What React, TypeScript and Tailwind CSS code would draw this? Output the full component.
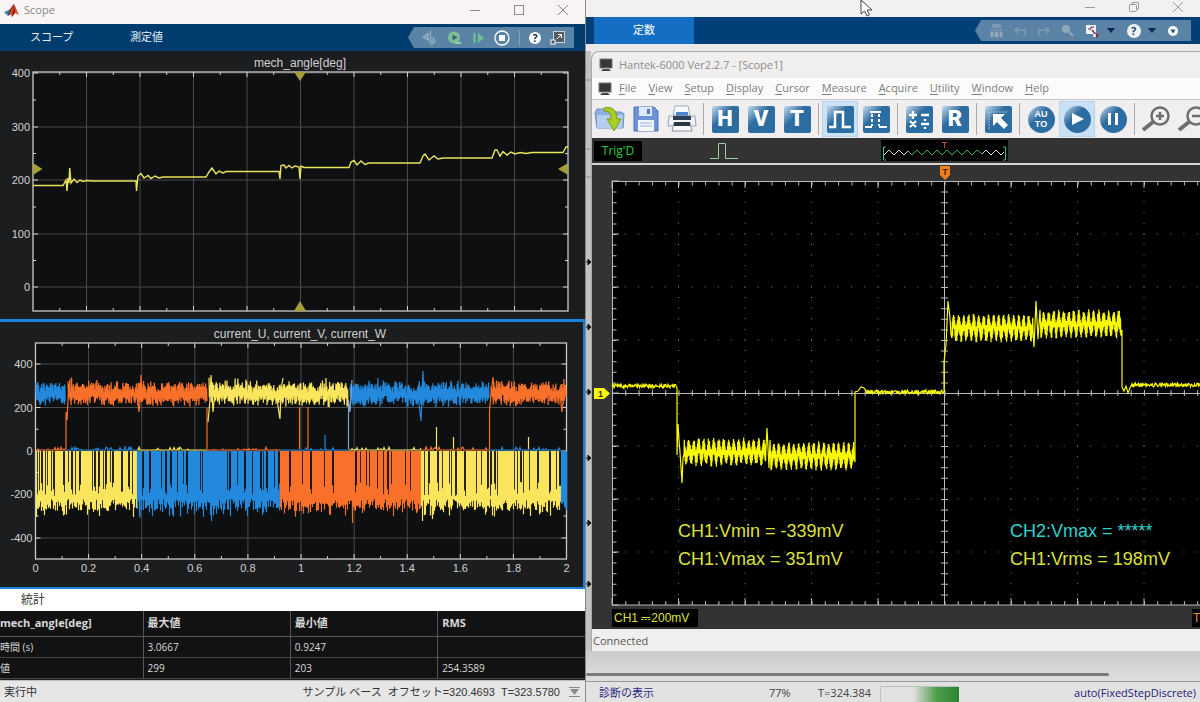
import type { ReactNode } from 'react'
import { clsx } from 'clsx'

const BLUE = '#2389dc'
const ORANGE = '#f8702a'
const YELLOW = '#fae55c'

// small seeded generator so the traces stay the same on every render
function seeded(seed: number) {
  let s = seed
  return () => {
    s = (s * 16807) % 2147483647
    return s / 2147483647
  }
}

const range = (n: number) => Array.from({ length: n }, (_, i) => i)

// conduction band at the top of the phase currents
function upperBand(x0: number, x1: number, seed: number) {
  const rnd = seeded(seed)
  let d = ''
  for (let x = x0; x <= x1; x += 0.9) {
    const mid = 394 + (rnd() - 0.5) * 7
    const top = mid - 4 - rnd() * 7 - (rnd() > 0.9 ? 3 : 0)
    const bottom = mid + 4 + rnd() * 6
    d += `${d ? 'L' : 'M'}${x.toFixed(1)} ${top.toFixed(1)}L${(x + 0.4).toFixed(1)} ${bottom.toFixed(1)}`
  }
  return d
}

// PWM band hanging under zero
function lowerBand(x0: number, x1: number, seed: number, duty: number) {
  const rnd = seeded(seed)
  let d = ''
  let gap = 0
  for (let x = x0; x <= x1; x += 1) {
    if (gap > 0) gap -= 1
    else if (rnd() > duty) gap = rnd() > 0.5 ? 2 : 1
    const top = gap > 0 ? 482 + rnd() * 14 : 451
    const bottom = 499 + rnd() * 12 + (rnd() > 0.75 ? 6 : 0)
    d += `M${x + 0.5} ${top.toFixed(1)}V${bottom.toFixed(1)}`
  }
  return d
}

function zeroLine(x0: number, x1: number, seed: number) {
  const rnd = seeded(seed)
  let d = `M${x0} 450`
  for (let x = x0 + 1; x <= x1; x += 1) d += `L${x} ${(450 - (rnd() > 0.8 ? rnd() * 3 : 0)).toFixed(1)}`
  return d
}

const upper = [
  { from: 36, to: 65, color: BLUE },
  { from: 68, to: 207, color: ORANGE },
  { from: 209, to: 348, color: YELLOW },
  { from: 350, to: 489, color: BLUE },
  { from: 491, to: 566, color: ORANGE },
]
const lower = [
  { from: 36, to: 136, color: YELLOW, duty: 0.68 },
  { from: 137, to: 279, color: BLUE, duty: 0.8 },
  { from: 280, to: 420, color: ORANGE, duty: 0.84 },
  { from: 421, to: 560, color: YELLOW, duty: 0.76 },
  { from: 561, to: 566, color: BLUE, duty: 1 },
]
const zero = [
  { from: 36, to: 66, color: ORANGE },
  { from: 66, to: 137, color: BLUE },
  { from: 137, to: 207, color: YELLOW },
  { from: 207, to: 280, color: ORANGE },
  { from: 280, to: 349, color: BLUE },
  { from: 349, to: 421, color: YELLOW },
  { from: 421, to: 490, color: ORANGE },
  { from: 490, to: 561, color: BLUE },
]
const spikes = [
  { d: 'M66 449V412L67 420L68 400L70 379', color: ORANGE },
  { d: 'M137 395L139 412L140 402L141 375L142 395', color: ORANGE },
  { d: 'M207 449V408', color: ORANGE },
  { d: 'M208 422L210 400L211 375L213 412L215 390', color: YELLOW },
  { d: 'M277 400L280 419L281 390L283 378', color: YELLOW },
  { d: 'M299.5 449V407M308 449V407', color: ORANGE },
  { d: 'M348.5 449V400L350 412L352 380', color: '#7ea6cf' },
  { d: 'M325 449V435', color: BLUE },
  { d: 'M418 395L421 421L422 395L423 371L424 402', color: BLUE },
  { d: 'M436.5 449V427M453.5 449V437M528.5 449V437', color: YELLOW },
  { d: 'M489.5 449V411L491 395L493 377L495 400', color: ORANGE },
  { d: 'M560 394L562 412L563 402', color: ORANGE },
  { d: 'M211.5 480V521M140 500V518', color: BLUE },
  { d: 'M352.5 480V523', color: ORANGE },
  { d: 'M422.5 480V521M432.5 480V519', color: YELLOW },
]

function Plot({ x, y, w, h, rows, labels }: {
  x: number
  y: number
  w: number
  h: number
  rows: number[]
  labels: string[]
}) {
  const step = w / 10
  return (
    <g>
      <rect x={x} y={y} width={w} height={h} fill="#0d0f11" />
      <g stroke="#4b4b4c" strokeWidth="1">
        {range(9).map((i) => <path key={i} d={`M${x + step * (i + 1)} ${y}v${h}`} />)}
        {rows.map((r) => <path key={r} d={`M${x} ${r}h${w}`} />)}
      </g>
      <g stroke="#d4d4d4" strokeWidth="1">
        {range(19).map((i) => {
          const t = i % 2 ? 5 : 3
          return <path key={i} d={`M${x + (step / 2) * (i + 1)} ${y}v${t}m0 ${h - 2 * t}v${t}`} />
        })}
        {rows.map((r) => <path key={r} d={`M${x} ${r}h5m${w - 10} 0h5`} />)}
        {rows.slice(1).map((r, i) => {
          const mid = (r + rows[i]) / 2
          return <path key={r} d={`M${x} ${mid}h3m${w - 6} 0h3`} />
        })}
      </g>
      <rect x={x} y={y} width={w} height={h} fill="none" stroke="#c9c9c9" strokeWidth="1.3" />
      <g fill="#d2d2d2" fontSize="11" textAnchor="end">
        {rows.map((r, i) => <text key={r} x={x - 3} y={r + 4}>{labels[i]}</text>)}
      </g>
    </g>
  )
}

function AngleChart() {
  return (
    <svg viewBox="0 51 585 268" className="w-full h-auto bg-[#1b1d1e] font-['Liberation_Sans',sans-serif]">
      <text x="300" y="67" fontSize="12" fill="#d2d2d2" textAnchor="middle">mech_angle[deg]</text>
      <Plot x={33} y={72} w={535} h={239} rows={[73, 127, 180, 234, 287]} labels={['400', '300', '200', '100', '0']} />
      <path
        d="M33 185.5H63L66 180L67 191L68 178L69 183L69.700 168L71 183L74 179L77 182.500L80 180L83 181.500L87 180.500L92 181H136L136.500 191L138 176L141 173.500L144 178L148 175.500L151 178.500L155 176L159 178L163 177H206L209 172L212 168L216 174L219 171L223 173L226 171.500H279L280 179L281 165.500L284 165L286 168L289 165.500L292 168L295 166L299 167L300 179L301 166L304 167.500H349L351 162L354 160.500L357 165L361 161L365 164.500L369 163H420L423 156L425 154L429 160L434 156L438 159L443 158H492L495 150L497 150L500 156L503 151.500L507 155L511 152L515 154L520 152.500L526 153.500L532 152.500H563L566 147H568"
        fill="none" stroke="#e8e45c" strokeWidth="1.4"
      />
      <g fill="#a3a03a">
        <path d="M294 72h12l-6 9z" />
        <path d="M294 311h12l-6-10z" />
        <path d="M33 163v12l9.500-6z" />
        <path d="M568 163v12l-10-6z" />
      </g>
    </svg>
  )
}

function CurrentChart() {
  return (
    <svg viewBox="0 322 583 265" className="w-full h-auto bg-[#1b1d1e] font-['Liberation_Sans',sans-serif]">
      <text x="300" y="338" fontSize="12" fill="#d2d2d2" textAnchor="middle">current_U, current_V, current_W</text>
      <Plot x={35.5} y={343} w={531} h={216} rows={[364, 407.5, 451, 494, 538]} labels={['400', '200', '0', '-200', '-400']} />
      <g fill="none" strokeWidth="1.2">
        {lower.map((s, i) => <path key={s.from} d={lowerBand(s.from, s.to, 91 + i * 37, s.duty)} stroke={s.color} />)}
        {upper.map((s, i) => <path key={s.from} d={upperBand(s.from, s.to, 1700 + i * 5300)} stroke={s.color} />)}
        {zero.map((s, i) => <path key={s.from} d={zeroLine(s.from, s.to, 7 + i * 11)} stroke={s.color} />)}
        {spikes.map((s) => <path key={s.d} d={s.d} stroke={s.color} />)}
      </g>
      <g fill="#d2d2d2" fontSize="11" textAnchor="middle">
        {['0', '0.2', '0.4', '0.6', '0.8', '1', '1.2', '1.4', '1.6', '1.8', '2'].map((t, i) => (
          <text key={t} x={35.5 + i * 53.1} y="572">{t}</text>
        ))}
      </g>
    </svg>
  )
}

const stats = [
  ['時間 (s)', '3.0667', '0.9247', ''],
  ['値', '299', '203', '254.3589'],
]

function ScopeWindow() {
  return (
    <section className="w-[48.75%] shrink-0 flex flex-col bg-[#1b1d1e] overflow-hidden">
      <header className="h-6 flex items-center justify-between pl-1 pr-4 bg-[#f7f4f3] text-[#8a8a8a]">
        <div className="flex items-center gap-1">
          <svg width="16" height="16" viewBox="0 0 16 16" className="mt-[-3px]">
            <path d="M0 9l5-2 2 2-3 4z" fill="#3d7fb5" />
            <path d="M5 7c2-1 3-5 5-6l-2 9-4 3z" fill="#6d3b45" />
            <path d="M10 1c2 3 3 8 5 11l-4-2-3 4-2-4z" fill="#dd4a28" />
            <path d="M10 1l1 9-3 4z" fill="#8f2420" />
          </svg>
          <h1 className="text-[11px] leading-4 -mt-1">Scope</h1>
        </div>
        <div className="flex items-center gap-8 -mt-1">
          <button aria-label="Minimize"><svg width="12" height="12" viewBox="0 0 12 12" fill="none" stroke="currentColor"><path d="M1 6.500h10" /></svg></button>
          <button aria-label="Maximize"><svg width="12" height="12" viewBox="0 0 12 12" fill="none" stroke="currentColor"><rect x="1.500" y="1.500" width="9" height="9" /></svg></button>
          <button aria-label="Close"><svg width="12" height="12" viewBox="0 0 12 12" fill="none" stroke="currentColor"><path d="M1 1l10 10M11 1L1 11" /></svg></button>
        </div>
      </header>

      <div className="h-[27px] flex items-center justify-between pl-[30px] pr-[11px] bg-[#003c6e] text-[#e4f0f8]">
        <nav className="flex text-[11px]">
          <button className="w-[100px] text-left">スコープ</button>
          <button className="w-[100px] text-left">測定値</button>
        </nav>
        <div className="h-[21px] w-[166px] flex items-center justify-between pl-3 pr-2 bg-[#5b83a5] [clip-path:polygon(0_50%,6px_0,100%_0,100%_100%,6px_100%)]">
          <button aria-label="Step back options">
            <svg width="18" height="16" viewBox="0 0 18 16" fill="none" stroke="#a5bac8"><path d="M8 3L3 7l5 3z" fill="#7f9bb0" /><path d="M10.500 1v6" /><circle cx="12" cy="11" r="3" /><circle cx="12" cy="11" r="1" /></svg>
          </button>
          <button aria-label="Run">
            <svg width="16" height="16" viewBox="0 0 16 16"><circle cx="7" cy="7.500" r="6" fill="#7fbd98" /><path d="M5.500 4.500l5 3-5 3z" fill="#2e6a75" /><path d="M8 12h6v2H8z" fill="#8fd0a2" /></svg>
          </button>
          <button aria-label="Step forward">
            <svg width="14" height="16" viewBox="0 0 14 16"><path d="M2.500 3v10" stroke="#6bc590" strokeWidth="2" /><path d="M6 3l6 5-6 5z" fill="#6bc590" /></svg>
          </button>
          <button aria-label="Stop">
            <svg width="16" height="16" viewBox="0 0 16 16"><circle cx="8" cy="8" r="7" fill="none" stroke="#fff" strokeWidth="1.300" /><rect x="5" y="5" width="6" height="6" fill="#fff" /></svg>
          </button>
          <span className="w-px h-4 bg-[#86a3bb]" />
          <button className="size-3 rounded-full bg-white text-[#10243c] text-[10px] leading-3 font-bold" aria-label="Help">?</button>
          <button aria-label="Undock">
            <svg width="16" height="16" viewBox="0 0 16 16" fill="none"><rect x="3.500" y="1.500" width="11" height="11" fill="#555f68" stroke="#c9d3da" /><path d="M7 9l4-4M8 4.500h3.500V8" stroke="#fff" /><rect x="1" y="10" width="4" height="4" fill="#3c5368" stroke="#fff" /></svg>
          </button>
        </div>
      </div>

      <AngleChart />
      <div className="border-t-[3px] border-b-2 border-r-2 border-[#1883db]">
        <CurrentChart />
      </div>

      <h2 className="h-[22px] pl-[21px] bg-white text-xs leading-[22px] text-[#333]">統計</h2>
      <table className="w-full table-fixed border-collapse bg-[#121213] text-[#dadada] text-[11px] leading-4 text-left">
        <thead>
          <tr className="h-[25px] border-b border-[#555]">
            <th className="w-[143px] font-bold border-r border-[#555]">mech_angle[deg]</th>
            <th className="pl-1 font-bold border-r border-[#555]">最大値</th>
            <th className="pl-1 font-bold border-r border-[#555]">最小値</th>
            <th className="pl-1 font-bold">RMS</th>
          </tr>
        </thead>
        <tbody className="text-[10px]">
          {stats.map((row) => (
            <tr key={row[0]} className="h-[21px] border-b border-[#444]">
              {row.map((cell, i) => (
                <td key={i} className={clsx(i > 0 && 'pl-1', i < 3 && 'border-r border-[#555]')}>{cell}</td>
              ))}
            </tr>
          ))}
        </tbody>
      </table>

      <footer className="flex-1 min-h-[22px] mt-px flex items-center bg-[#e6e6e6] border-t border-[#bbb] pl-1 pr-1 text-[11px] text-[#333] whitespace-nowrap font-['Liberation_Sans','Noto_Sans_CJK_JP',sans-serif]">
        <span>実行中</span>
        <span className="ml-auto">サンプル ベース</span>
        <span className="ml-[6px]">オフセット=320.4693</span>
        <span className="ml-[6px]">T=323.5780</span>
        <svg width="13" height="10" viewBox="0 0 13 10" className="ml-2"><path d="M1 .500h11M1 9.500h11" stroke="#8a8a8a" /><path d="M2 2h9L6.500 8z" fill="#8a8a8a" /></svg>
      </footer>
    </section>
  )
}

function TileIcon({ round, children }: { round?: boolean; children: ReactNode }) {
  return (
    <span
      className={clsx(
        'size-[27px] flex flex-col items-center justify-center text-white bg-linear-to-br from-[#b4d0e5] from-5% via-[#2d6c9f] via-40% to-[#2a6fa6]',
        round ? 'rounded-full' : 'rounded-[2px]',
      )}
    >
      {children}
    </span>
  )
}

function ToolButton({ label, active, children }: { label: string; active?: boolean; children: ReactNode }) {
  return (
    <button
      aria-label={label}
      className={clsx('w-9 h-9 shrink-0 flex items-center justify-center', active && 'bg-[#c9e0f5] border border-[#b3d2ee]')}
    >
      {children}
    </button>
  )
}

const Letter = ({ children }: { children: string }) => (
  <span className="text-[22px] leading-6 font-black font-['Roboto',sans-serif]">{children}</span>
)
const Sep = () => <span className="w-px h-8 mx-[3px] shrink-0 bg-[#a9a9a9]" />

function Toolbar() {
  return (
    <div className="h-[39px] flex items-center bg-[#f0eeee] border-t border-[#c5c5c5] overflow-hidden">
      <ToolButton label="Open">
        <svg width="32" height="28" viewBox="0 0 32 28">
          <path d="M1 8l2-4h9l2 3h13l3 2-1 14H3z" fill="#8fb0dc" stroke="#6d8fbf" />
          <path d="M3 10h26l-1 13H3z" fill="#b5cdef" />
          <path d="M10 3c8-2 13 2 13 11h4l-7 12-7-12h4c0-6-2-8-7-8z" fill="#a8cf22" stroke="#78991c" />
        </svg>
      </ToolButton>
      <ToolButton label="Save">
        <svg width="26" height="26" viewBox="0 0 26 26">
          <path d="M1 1h20l4 4v20H1z" fill="#6d92d6" stroke="#4c70b5" />
          <rect x="6" y="1" width="13" height="9" fill="#dfe9fa" />
          <rect x="14" y="3" width="3" height="5" fill="#5375b8" />
          <rect x="5" y="14" width="16" height="11" fill="#f2f6fd" />
          <path d="M7 17h12M7 20h12" stroke="#9db3dc" />
        </svg>
      </ToolButton>
      <ToolButton label="Print">
        <svg width="30" height="28" viewBox="0 0 30 28">
          <path d="M8 1h13l2 9H6z" fill="#f7fafd" stroke="#9aa9bb" />
          <path d="M9 7h12v5H9z" fill="#4c86c8" />
          <path d="M2 11h26l1 10H1z" fill="#eef2f6" stroke="#9aa3ad" />
          <path d="M6 11h18v4H6z" fill="#2c3f57" />
          <path d="M7 18h16l2 8H5z" fill="#fafafa" stroke="#8a93a0" />
          <path d="M7 17h16v4H7z" fill="#2a3442" />
        </svg>
      </ToolButton>
      <Sep />
      <ToolButton label="Horizontal"><TileIcon><Letter>H</Letter></TileIcon></ToolButton>
      <ToolButton label="Vertical"><TileIcon><Letter>V</Letter></TileIcon></ToolButton>
      <ToolButton label="Trigger"><TileIcon><Letter>T</Letter></TileIcon></ToolButton>
      <Sep />
      <ToolButton label="Pulse" active>
        <TileIcon><svg width="24" height="22" viewBox="0 0 24 22" fill="none" stroke="#fff" strokeWidth="2.500"><path d="M1 19h6V4h8v15h8" /></svg></TileIcon>
      </ToolButton>
      <ToolButton label="Edges">
        <TileIcon>
          <svg width="24" height="22" viewBox="0 0 24 22" fill="none" stroke="#fff" strokeWidth="2"><path d="M1 19h7M15 19h8M6 4h11" /><path d="M8 6v12M15 6v12" strokeDasharray="3 2" /></svg>
        </TileIcon>
      </ToolButton>
      <Sep />
      <ToolButton label="Math">
        <TileIcon>
          <svg width="24" height="24" viewBox="0 0 24 24" fill="none" stroke="#fff" strokeWidth="2.400"><path d="M2 8h8M6 4v8M14 8h8M3 14l6 6M9 14l-6 6M14 17h8M18 12v2M18 20v2" /></svg>
        </TileIcon>
      </ToolButton>
      <ToolButton label="Reference"><TileIcon><Letter>R</Letter></TileIcon></ToolButton>
      <Sep />
      <ToolButton label="Cursor">
        <TileIcon>
          <svg width="24" height="24" viewBox="0 0 24 24"><path d="M3 22V5h19" fill="none" stroke="#a9c9e0" strokeDasharray="2 1" /><path d="M7 7h12l-4 4 7 7-4 4-7-7-4 4z" fill="#fff" /></svg>
        </TileIcon>
      </ToolButton>
      <Sep />
      <ToolButton label="Auto">
        <TileIcon round>
          <span className="text-[9px] leading-[10px] font-bold font-['Liberation_Sans',sans-serif]">AU</span>
          <span className="text-[9px] leading-[10px] font-bold font-['Liberation_Sans',sans-serif]">TO</span>
        </TileIcon>
      </ToolButton>
      <ToolButton label="Start" active>
        <TileIcon round><svg width="16" height="14" viewBox="0 0 16 14"><path d="M3 1l12 6-12 6z" fill="#fff" /></svg></TileIcon>
      </ToolButton>
      <ToolButton label="Pause">
        <TileIcon round><svg width="12" height="14" viewBox="0 0 12 14"><path d="M1 1h3v12H1zM8 1h3v12H8z" fill="#fff" /></svg></TileIcon>
      </ToolButton>
      <Sep />
      <ToolButton label="Zoom in">
        <svg width="30" height="28" viewBox="0 0 30 28" fill="none" stroke="#6e6e6e" strokeWidth="2.500"><circle cx="19" cy="11" r="8.500" /><path d="M15 11h8M19 7v8" /><path d="M12 17L2 25" strokeWidth="4" /></svg>
      </ToolButton>
      <ToolButton label="Zoom out">
        <svg width="30" height="28" viewBox="0 0 30 28" fill="none" stroke="#6e6e6e" strokeWidth="2.500"><circle cx="19" cy="11" r="8.500" /><path d="M15 11h8" /><path d="M12 17L2 25" strokeWidth="4" /></svg>
      </ToolButton>
    </div>
  )
}

// CH1 trace of the oscilloscope
function scopeTrace() {
  const rnd = seeded(4321)
  const flat = (x0: number, x1: number, y: number) =>
    range(Math.floor((x1 - x0) * 2)).map((i) => `L${x0 + i / 2} ${(y + (rnd() - 0.5) * 4).toFixed(1)}`).join('')
  const band = (x0: number, x1: number, y: number) => {
    let d = ''
    let sign = 1
    for (let x = x0; x < x1; x += 0.3) {
      const v = y + Math.sin((x * Math.PI * 2) / 5) * 6 + sign * (5 + rnd() * 4)
      d += `L${x.toFixed(1)} ${v.toFixed(1)}`
      sign = -sign
    }
    return d
  }
  return (
    'M612 386' + flat(613, 676, 386) + 'L677 388V455L678 424L679 440L680 452L682 483L683 458' +
    band(684, 766, 452) + 'L767 428L769 468L770 440' + band(771, 854, 456) + 'L855 462V392L858 391L861 387L864 388' +
    flat(866, 943, 392) + 'L944 392V362L946 345L948 301L950 318L951 335' + band(952, 1033, 328) +
    'L1034 347L1036 301L1038 339L1040 310' + band(1041, 1121, 324) + 'L1122 330V387L1124 391L1126 386L1128 393L1130 388' +
    flat(1132, 1200, 385)
  )
}

function ScopeScreen() {
  const cols = range(9).map((i) => 612 + i * 66.5)
  const rows = range(9).map((i) => 181 + i * 53)
  return (
    <svg viewBox="592 165 608 442" className="w-full h-auto bg-[#333333] font-['Liberation_Sans',sans-serif]">
      <rect x="612" y="181" width="600" height="424" fill="#000" />
      <g stroke="#77777c" strokeWidth="1">
        {rows.slice(1, 8).map((y) => <path key={y} d={`M624.800 ${y}H1200`} strokeDasharray="1 12.300" />)}
        {cols.slice(1).map((x) => <path key={x} d={`M${x} 191V605`} strokeDasharray="1 9.600" />)}
      </g>
      <g fill="none" stroke="#b9b9b9">
        <path d="M612 183.500H1200M612 603H1200" strokeWidth="4" strokeDasharray="1 12.300" />
        <path d="M614.500 181V605" strokeWidth="4" strokeDasharray="1 9.600" />
        {cols.map((x) => <path key={x} d={`M${x} 181v7M${x} 598v7`} />)}
        {rows.map((y) => <path key={y} d={`M612 ${y}h7`} />)}
        <path d="M612 393H1200" strokeWidth="6" strokeDasharray="1 12.300" />
        <path d="M944.500 181V605" strokeWidth="7" strokeDasharray="1 9.600" />
        <path d="M612 393.500H1200M944.500 181V605M612.500 605V181.500H1200M612 605H1200" />
      </g>
      <path d={scopeTrace()} fill="none" stroke="#f8f800" strokeWidth="1.2" />
      <path d="M594 388h10l6 5.500-6 5.500H594z" fill="#f8f800" />
      <text x="598" y="397" fontSize="9" fontWeight="bold" fill="#333">1</text>
      <path d="M940 166h10v9l-5 5-5-5z" fill="#f07f1c" />
      <text x="945" y="175" fontSize="9" fontWeight="bold" fill="#4a2205" textAnchor="middle">T</text>
      <g fontSize="18" fill="#dce03c">
        <text x="678" y="537">CH1:Vmin = -339mV</text>
        <text x="678" y="565">CH1:Vmax = 351mV</text>
        <text x="1010" y="537" fill="#2fd2cf">CH2:Vmax = *****</text>
        <text x="1010" y="565">CH1:Vrms = 198mV</text>
      </g>
    </svg>
  )
}

const MonitorIcon = () => (
  <svg width="14" height="14" viewBox="0 0 14 14"><rect x="1" y="1" width="12" height="9" fill="#33383c" stroke="#777" /><path d="M4 11h6l2 2H2z" fill="#444" /></svg>
)

const menus = ['File', 'View', 'Setup', 'Display', 'Cursor', 'Measure', 'Acquire', 'Utility', 'Window', 'Help']

function HantekWindow() {
  return (
    <section className="flex-1 min-w-0 rounded-tl-lg border-t border-l border-[#a9a9a9] bg-[#f1efee] overflow-hidden">
      <header className="h-[26px] flex items-center gap-[6px] pl-[7px] text-[11px] text-[#8c8c8c]">
        <MonitorIcon />
        <h1>Hantek-6000 Ver2.2.7 - [Scope1]</h1>
      </header>
      <nav className="h-[21px] flex items-center pl-[6px] bg-[#fbfbfb] text-[11px] text-[#7d7d7d]">
        <MonitorIcon />
        <div className="flex gap-3 ml-[7px]">
          {menus.map((m) => (
            <button key={m}><span className="underline underline-offset-2">{m[0]}</span>{m.slice(1)}</button>
          ))}
        </div>
      </nav>
      <Toolbar />

      <div className="h-[27px] flex items-center justify-between pl-[2px] pr-[192px] bg-[#333333] border-b-2 border-[#d5d5d5]">
        <div className="flex items-center gap-[68px]">
          <span className="w-12 h-5 bg-black text-[#22cf3c] text-xs leading-5 text-center">Trig'D</span>
          <svg width="28" height="18" viewBox="0 0 28 18" fill="none" stroke="#9dc9a0"><path d="M0 16.500h8.500v-15h7v15H28" /></svg>
        </div>
        <svg width="127" height="21" viewBox="0 0 127 21" fill="none" className="bg-black">
          <path d="M3 15l5-5 5 5 5-5 5 5 4-4" stroke="#ddd" />
          <path d="M27 11l4 4 5-5 5 5 5-5 5 5 5-5 5 5 5-5 5 5 5-5 5 5 5-5 5 5 5-5 5 4" stroke="#2fae45" />
          <path d="M101 14l4-4 5 5 5-5 5 5 3-3" stroke="#ddd" />
          <path d="M5 7H2.500v13H5M122 7h2.500v13H122" stroke="#2fbfa5" />
          <path d="M61 2.500h5M63.500 2v6" stroke="#c2482a" />
        </svg>
      </div>

      <ScopeScreen />
      <div className="h-[22px] flex items-center justify-between pl-5 bg-[#333333] text-xs text-[#dce03c] font-['Liberation_Sans',sans-serif]">
        <span className="h-[18px] w-[86px] pl-[2px] leading-[18px] bg-black whitespace-nowrap">CH1 ⎓200mV</span>
        <span className="h-[18px] w-[8px] pl-px leading-[18px] bg-black text-[#e08a2c] overflow-hidden">T</span>
      </div>
      <p className="h-5 pl-px mt-[2px] text-[11px] leading-5 text-[#555]">Connected</p>
    </section>
  )
}

const Caret = () => <svg width="8" height="5" viewBox="0 0 8 5"><path d="M0 0h8L4 5z" fill="#0b2350" /></svg>

function ModelWindow() {
  return (
    <section className="flex-1 min-w-0 relative flex flex-col bg-[#d6d6d6] border-l border-[#8a8a8a] overflow-hidden">
      <header className="h-[17px] flex items-center justify-end gap-8 pr-4 pb-1 bg-[#f3f1f0] text-[#9a9a9a]">
        <button aria-label="Minimize"><svg width="12" height="12" viewBox="0 0 12 12" fill="none" stroke="currentColor"><path d="M1 6.500h10" /></svg></button>
        <button aria-label="Restore"><svg width="12" height="12" viewBox="0 0 12 12" fill="none" stroke="currentColor"><rect x="1.500" y="3.500" width="7" height="7" rx="1" /><path d="M4 3V1.500h6.500V8H9" /></svg></button>
        <button aria-label="Close"><svg width="12" height="12" viewBox="0 0 12 12" fill="none" stroke="currentColor"><path d="M1 1l10 10M11 1L1 11" /></svg></button>
      </header>
      <svg width="13" height="18" viewBox="0 0 13 18" className="absolute left-[274px] -top-px"><path d="M1 1v14l3.500-3 2.500 5 2.500-1.200L7 11h5z" fill="#fff" stroke="#444" /></svg>

      <div className="h-[27px] flex items-center justify-between pl-2 pr-[9px] bg-[#003f78]">
        <button className="h-full w-[100px] bg-[#146fc4] text-[11px] text-white">定数</button>
        <div className="h-[21px] w-[216px] flex items-center justify-between pl-[14px] pr-3 bg-[#5b83a5] [clip-path:polygon(0_50%,6px_0,100%_0,100%_100%,6px_100%)]">
          <button aria-label="Save"><svg width="14" height="16" viewBox="0 0 14 16"><path d="M3 1h9v4H3z" fill="#7d98ad" /><path d="M1 7h12M2 9h2v5H2zM6 9h3v5H6zM11 9h2v5h-2z" fill="#9fb3c2" stroke="#88a0b3" /></svg></button>
          <button aria-label="Undo"><svg width="12" height="10" viewBox="0 0 12 10" fill="none" stroke="#7f9bb0" strokeWidth="1.500"><path d="M4 1L1 4l3 3M1 4h10v5" /></svg></button>
          <button aria-label="Redo"><svg width="12" height="10" viewBox="0 0 12 10" fill="none" stroke="#7f9bb0" strokeWidth="1.500"><path d="M8 1l3 3-3 3M11 4H1v5" /></svg></button>
          <button aria-label="Find"><svg width="13" height="13" viewBox="0 0 13 13"><circle cx="5" cy="5" r="4" fill="#8fa8bb" /><path d="M8 8l4 4" stroke="#8fa8bb" strokeWidth="2" /></svg></button>
          <button aria-label="Library" className="flex items-center gap-[7px]">
            <svg width="15" height="14" viewBox="0 0 15 14" fill="none"><rect x="1" y="1" width="10" height="9" fill="#eef2f5" /><path d="M3 5h3v-2h3" stroke="#6b2a3c" /><path d="M7 6l6 7M11 13l2-3" stroke="#8a2634" strokeWidth="1.500" /><rect x="8" y="10" width="3" height="3" fill="#d8dfe4" /></svg>
            <Caret />
          </button>
          <button aria-label="Help" className="flex items-center gap-[7px]">
            <span className="size-[14px] rounded-full bg-[#eef3f6] text-[#1c3e60] text-[11px] leading-[14px] font-bold">?</span>
            <Caret />
          </button>
          <button aria-label="More"><svg width="12" height="12" viewBox="0 0 12 12"><circle cx="6" cy="6" r="5" fill="#fff" /><path d="M3.500 4.500h5L6 8.500z" fill="#14507c" /></svg></button>
        </div>
      </div>

      <div className="flex pt-[7px] bg-linear-to-b from-[#eceae9] to-[#cccccc]">
        <svg width="5" height="598" viewBox="586 51 5 598" className="shrink-0 bg-[#c2c2c2]">
          <path d="M586 80h6M586 149h6M586 177h6" stroke="#8b8b8b" />
          {[262, 327, 392, 458, 523, 584].map((y) => <path key={y} d={`M586 ${y}h2v-3l3 3-3 3v-3`} fill="#111" stroke="#111" />)}
        </svg>
        <HantekWindow />
      </div>

      <div className="h-[31px] pt-[22px] pr-[91px] bg-linear-to-b from-[#cbcbcb] to-[#dedede] border-b border-[#9a9a9a]">
        <div className="h-[3px] rounded-full bg-[#7b7b7b]" />
      </div>
      <footer className="flex-1 min-h-[22px] flex items-center pl-[13px] pr-1 bg-[#e2e2e2] text-[11px] text-[#444] whitespace-nowrap">
        <a href="#diagnostics" className="w-[170px] text-[#2b2b80]">診断の表示</a>
        <span className="w-[49px]">77%</span>
        <span className="w-[62px]">T=324.384</span>
        <div className="w-[79px] self-stretch mt-1 border-t border-l border-[#c0c0c0] flex justify-end">
          <div className="w-[46px] bg-linear-to-r from-[#e2e2e2] via-[#4f9f4f] to-[#2c852c]" />
        </div>
        <a href="#solver" className="ml-auto text-[#22227a]">auto(FixedStepDiscrete)</a>
      </footer>
    </section>
  )
}

export default function App() {
  return (
    <main className="min-h-screen flex overflow-hidden font-['Open_Sans','Noto_Sans_CJK_JP',sans-serif]">
      <ScopeWindow />
      <ModelWindow />
    </main>
  )
}
